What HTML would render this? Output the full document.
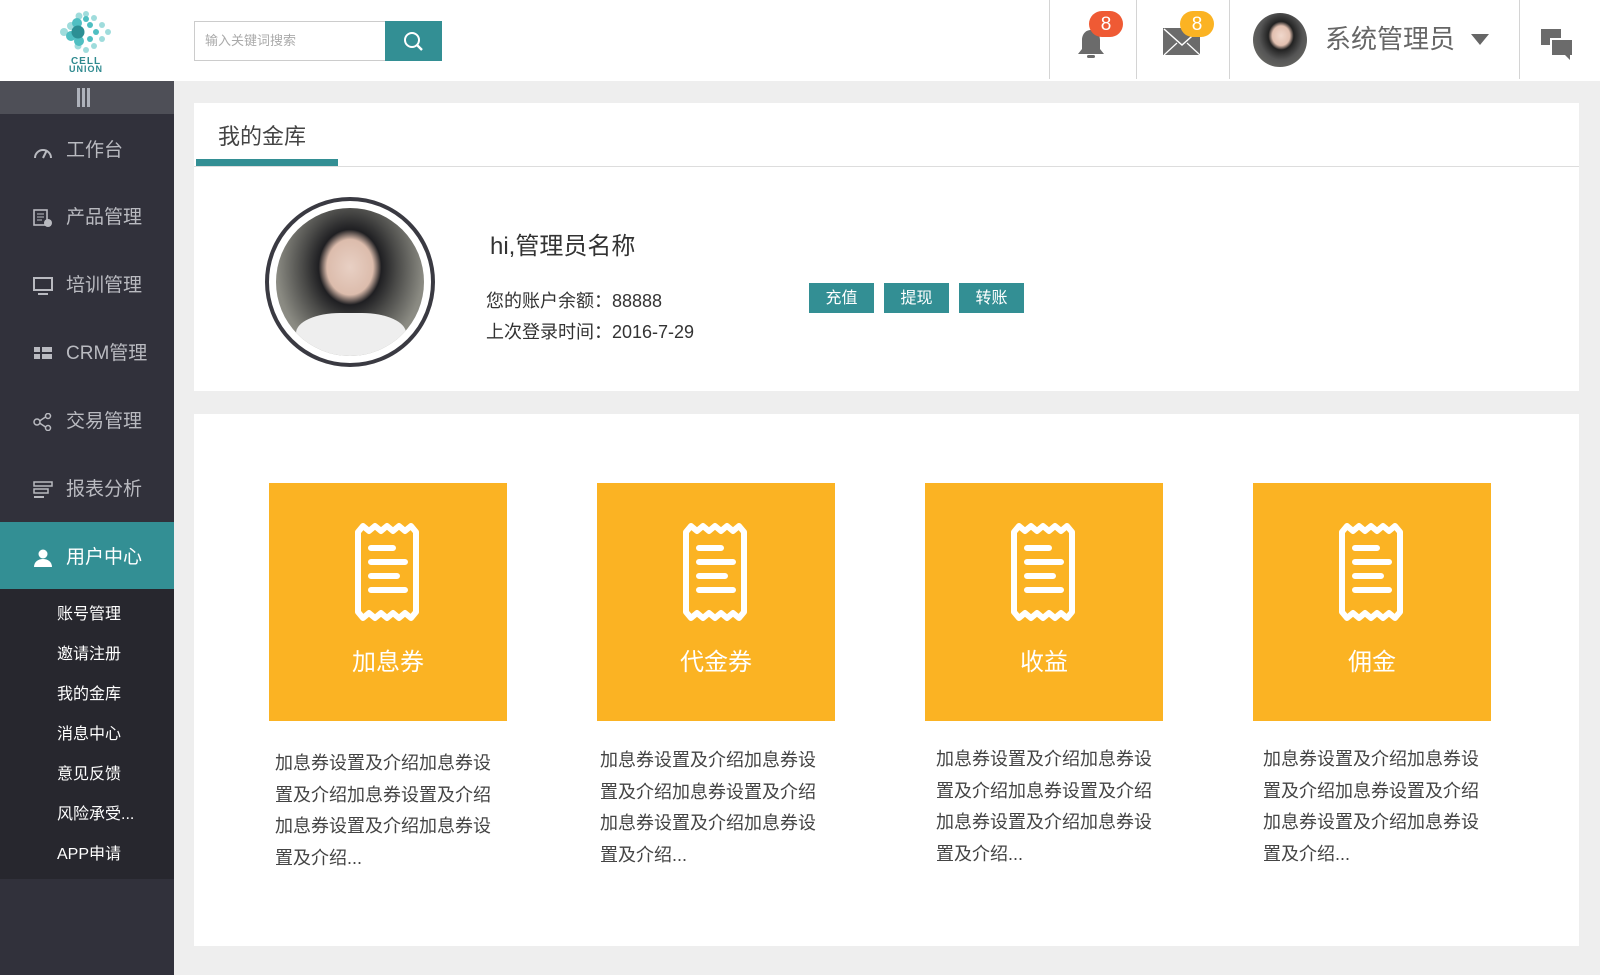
<!DOCTYPE html>
<html><head><meta charset="utf-8"><style>
*{margin:0;padding:0;box-sizing:border-box}
body{width:1600px;height:975px;background:#eeeeee;font-family:"Liberation Sans","Noto Sans CJK SC",sans-serif;position:relative;overflow:hidden;color:#333}
.abs{position:absolute}
#hdr{left:0;top:0;width:1600px;height:81px;background:#fff}
.sep{position:absolute;top:0;width:1px;height:79px;background:#d4d4d4}
.badge{position:absolute;width:34px;height:26px;border-radius:13px;color:#fff;font-size:19px;text-align:center;line-height:28px}
#side{left:0;top:81px;width:174px;height:894px;background:#31313b}
.mi{position:absolute;left:0;width:174px;height:68px;color:#b9bac0;font-size:19px;line-height:72px;padding-left:66px}
.mi svg{position:absolute;left:33px;top:27px}
.si{position:absolute;left:57px;color:#fff;font-size:16px;line-height:24px}
.card{background:#fff;position:absolute}
.btn{position:absolute;top:283px;width:65px;height:30px;background:#338f94;color:#fff;font-size:16px;text-align:center;line-height:32px}
.tile{position:absolute;top:483px;width:238px;height:238px;background:#fbb323;color:#fff;font-size:24px;text-align:center}
.tile svg{position:absolute;left:84px;top:39px}
.tile span{position:absolute;left:0;right:0;top:164px;line-height:32px}
.desc{position:absolute;top:748px;width:230px;font-size:18px;line-height:31.5px;color:#444}
</style></head><body>
<div id="hdr" class="abs">
 <svg class="abs" style="left:56px;top:8px" width="60" height="66" viewBox="0 0 60 66">
  <g fill="#9fdcdc"><circle cx="15" cy="18" r="4"/><circle cx="23" cy="8" r="3.5"/><circle cx="30" cy="6" r="3"/><circle cx="38" cy="10" r="3"/><circle cx="46" cy="17" r="3"/><circle cx="52" cy="24" r="3"/><circle cx="46" cy="31" r="3"/><circle cx="38" cy="38" r="3"/><circle cx="30" cy="42" r="3"/><circle cx="22" cy="38" r="3.5"/><circle cx="8" cy="24" r="4"/></g>
  <g fill="#4fbfc2"><circle cx="21" cy="15" r="5"/><circle cx="15" cy="28" r="5"/><circle cx="23" cy="33" r="5"/><circle cx="34" cy="17" r="3"/><circle cx="40" cy="24" r="3"/><circle cx="34" cy="31" r="3"/><circle cx="30" cy="11" r="3"/></g>
  <circle cx="22" cy="24" r="6.5" fill="#2c8f94"/>
  <text x="30" y="56" font-size="10" font-weight="bold" fill="#2f8a8f" text-anchor="middle" font-family="Liberation Sans" letter-spacing="1">CELL</text>
  <text x="30" y="64" font-size="9" font-weight="bold" fill="#2f8a8f" text-anchor="middle" font-family="Liberation Sans" letter-spacing="1">UNION</text>
 </svg>
 <div class="abs" style="left:194px;top:21px;width:192px;height:40px;border:1px solid #ccc;font-size:13px;color:#aaa;line-height:38px;padding-left:10px">输入关键词搜索</div>
 <div class="abs" style="left:385px;top:21px;width:57px;height:40px;background:#338f94">
  <svg width="57" height="40"><circle cx="27" cy="19" r="7" fill="none" stroke="#fff" stroke-width="2"/><line x1="32" y1="24" x2="37" y2="29" stroke="#fff" stroke-width="2.4"/></svg>
 </div>
 <div class="sep" style="left:1049px"></div><div class="sep" style="left:1136px"></div><div class="sep" style="left:1229px"></div><div class="sep" style="left:1519px"></div>
 <svg class="abs" style="left:1074px;top:28px" width="34" height="34" viewBox="0 0 34 34"><path d="M17 2c-6 0-9 5-9 10v9l-4 5h26l-4-5v-9c0-5-3-10-9-10z" fill="#6b6b6b"/><rect x="13" y="27" width="8" height="3" rx="1.5" fill="#6b6b6b"/></svg>
 <div class="badge" style="left:1089px;top:11px;background:#ef5a34">8</div>
 <svg class="abs" style="left:1163px;top:28px" width="38" height="28" viewBox="0 0 38 28"><rect width="37" height="27" fill="#6b6b6b"/><path d="M1 1l18 16 18-16" fill="none" stroke="#fff" stroke-width="1.5"/><path d="M1 27l13-12M37 27l-13-12" stroke="#fff" stroke-width="1.2"/></svg>
 <div class="badge" style="left:1180px;top:11px;background:#fbb323">8</div>
 <div class="abs" style="left:1253px;top:13px;width:54px;height:54px;border-radius:50%;background:radial-gradient(ellipse at 52% 42%,#f0d8cc 0,#e2c0b0 22%,#222 32%,#555 55%,#7a7a72 100%)"></div>
 <div class="abs" style="left:1325px;top:21px;font-size:26px;color:#666;line-height:36px">系统管理员</div>
 <svg class="abs" style="left:1471px;top:34px" width="20" height="12"><path d="M0 0h18l-9 11z" fill="#666"/></svg>
 <svg class="abs" style="left:1541px;top:29px" width="34" height="34" viewBox="0 0 34 34"><rect x="0" y="0" width="20" height="16" fill="#6b6b6b"/><rect x="9" y="9" width="22" height="17" fill="#fff"/><rect x="11" y="11" width="20" height="15" fill="#6b6b6b"/><path d="M24 26h5v5z" fill="#6b6b6b"/></svg>
</div>
<div id="side" class="abs">
 <div class="abs" style="left:0;top:0;width:174px;height:33px;background:#4e4f57"><div class="abs" style="left:77px;top:7px;width:3px;height:19px;background:#aeb2bb"></div><div class="abs" style="left:82px;top:7px;width:3px;height:19px;background:#aeb2bb"></div><div class="abs" style="left:87px;top:7px;width:3px;height:19px;background:#aeb2bb"></div></div>
 <div class="mi" style="top:34px"><svg width="20" height="18"><path d="M2 16a8 8 0 0 1 16 0" fill="none" stroke="#b9bac0" stroke-width="2"/><path d="M10 16l4-8" stroke="#b9bac0" stroke-width="2"/></svg>工作台</div>
 <div class="mi" style="top:101px"><svg width="20" height="18"><rect x="1" y="1" width="13" height="15" fill="none" stroke="#b9bac0" stroke-width="1.6"/><path d="M4 5h7M4 8h7M4 11h5" stroke="#b9bac0"/><circle cx="15" cy="14" r="4" fill="#b9bac0"/></svg>产品管理</div>
 <div class="mi" style="top:169px"><svg width="20" height="18"><rect x="1" y="1" width="18" height="12" fill="none" stroke="#b9bac0" stroke-width="2"/><path d="M5 17h10" stroke="#b9bac0" stroke-width="2"/></svg>培训管理</div>
 <div class="mi" style="top:237px"><svg width="20" height="18"><rect x="1" y="2" width="6" height="5" fill="#b9bac0"/><rect x="9" y="2" width="10" height="5" fill="#b9bac0"/><rect x="1" y="9" width="6" height="5" fill="#b9bac0"/><rect x="9" y="9" width="10" height="5" fill="#b9bac0"/></svg>CRM管理</div>
 <div class="mi" style="top:305px"><svg width="20" height="18"><circle cx="4" cy="9" r="3" fill="none" stroke="#b9bac0" stroke-width="1.5"/><circle cx="15" cy="3" r="2.5" fill="none" stroke="#b9bac0" stroke-width="1.5"/><circle cx="15" cy="15" r="2.5" fill="none" stroke="#b9bac0" stroke-width="1.5"/><path d="M6.5 8l6-4M6.5 10l6 4" stroke="#b9bac0" stroke-width="1.5"/></svg>交易管理</div>
 <div class="mi" style="top:373px"><svg width="20" height="18"><rect x="1" y="1" width="18" height="4" fill="none" stroke="#b9bac0" stroke-width="1.5"/><rect x="1" y="8" width="14" height="4" fill="none" stroke="#b9bac0" stroke-width="1.5"/><path d="M1 16h10" stroke="#b9bac0" stroke-width="2"/></svg>报表分析</div>
 <div class="mi" style="top:441px;height:67px;background:#338f94;color:#fff"><svg width="20" height="18"><circle cx="10" cy="5" r="4.5" fill="#fff"/><path d="M1 18c0-5 4-8 9-8s9 3 9 8z" fill="#fff"/></svg>用户中心</div>
 <div class="abs" style="left:0;top:508px;width:174px;height:290px;background:#27272e">
  <div class="si" style="top:14px">账号管理</div><div class="si" style="top:54px">邀请注册</div><div class="si" style="top:94px">我的金库</div><div class="si" style="top:134px">消息中心</div><div class="si" style="top:174px">意见反馈</div><div class="si" style="top:214px">风险承受...</div><div class="si" style="top:254px">APP申请</div>
 </div>
</div>
<div class="card" style="left:194px;top:103px;width:1385px;height:288px">
 <div class="abs" style="left:24px;top:17px;font-size:22px;color:#444;line-height:34px">我的金库</div>
 <div class="abs" style="left:2px;top:56px;width:142px;height:7px;background:#338f94"></div>
 <div class="abs" style="left:0;top:63px;width:1385px;height:1px;background:#ddd"></div>
 <div class="abs" style="left:71px;top:94px;width:170px;height:170px;border-radius:50%;border:4px solid #3a3a42;background:#fff"></div>
 <div class="abs" style="left:82px;top:105px;width:148px;height:148px;border-radius:50%;background:radial-gradient(ellipse at 50% 40%,#e8d0c4 0,#dcbcac 22%,#1f1f22 30%,#4a4a48 45%,#8a8a82 70%,#9a9a92 100%);overflow:hidden"><div style="position:absolute;left:20px;top:105px;width:110px;height:50px;background:#eee;border-radius:40%"></div></div>
 <div class="abs" style="left:296px;top:128px;font-size:24px;color:#333;line-height:32px">hi,管理员名称</div>
 <div class="abs" style="left:292px;top:186px;font-size:18px;color:#333;line-height:24px">您的账户余额：88888</div>
 <div class="abs" style="left:292px;top:217px;font-size:18px;color:#333;line-height:24px">上次登录时间：2016-7-29</div>
</div>
<div class="btn" style="left:809px">充值</div><div class="btn" style="left:884px">提现</div><div class="btn" style="left:959px">转账</div>
<div class="card" style="left:194px;top:414px;width:1385px;height:532px"></div>
<div class="tile" style="left:269px"><svg width="70" height="100" viewBox="0 0 70 100"><path d="M5 10l5-6 6 5 6-5 6 5 6-5 6 5 6-5 6 5 6-5 5 6v80l-5 6-6-5-6 5-6-5-6 5-6-5-6 5-6-5-6 5-5-6z" fill="none" stroke="#fff" stroke-width="6" stroke-linejoin="round"/><path d="M18 26h22M18 40h34M18 54h26M18 68h34" stroke="#fff" stroke-width="6" stroke-linecap="round"/></svg><span>加息券</span></div>
<div class="tile" style="left:597px"><svg width="70" height="100" viewBox="0 0 70 100"><path d="M5 10l5-6 6 5 6-5 6 5 6-5 6 5 6-5 6 5 6-5 5 6v80l-5 6-6-5-6 5-6-5-6 5-6-5-6 5-6-5-6 5-5-6z" fill="none" stroke="#fff" stroke-width="6" stroke-linejoin="round"/><path d="M18 26h22M18 40h34M18 54h26M18 68h34" stroke="#fff" stroke-width="6" stroke-linecap="round"/></svg><span>代金券</span></div>
<div class="tile" style="left:925px"><svg width="70" height="100" viewBox="0 0 70 100"><path d="M5 10l5-6 6 5 6-5 6 5 6-5 6 5 6-5 6 5 6-5 5 6v80l-5 6-6-5-6 5-6-5-6 5-6-5-6 5-6-5-6 5-5-6z" fill="none" stroke="#fff" stroke-width="6" stroke-linejoin="round"/><path d="M18 26h22M18 40h34M18 54h26M18 68h34" stroke="#fff" stroke-width="6" stroke-linecap="round"/></svg><span>收益</span></div>
<div class="tile" style="left:1253px"><svg width="70" height="100" viewBox="0 0 70 100"><path d="M5 10l5-6 6 5 6-5 6 5 6-5 6 5 6-5 6 5 6-5 5 6v80l-5 6-6-5-6 5-6-5-6 5-6-5-6 5-6-5-6 5-5-6z" fill="none" stroke="#fff" stroke-width="6" stroke-linejoin="round"/><path d="M18 26h22M18 40h34M18 54h26M18 68h34" stroke="#fff" stroke-width="6" stroke-linecap="round"/></svg><span>佣金</span></div>
<div class="desc" style="left:275px">加息券设置及介绍加息券设置及介绍加息券设置及介绍加息券设置及介绍加息券设置及介绍...</div>
<div class="desc" style="left:600px;top:745px">加息券设置及介绍加息券设置及介绍加息券设置及介绍加息券设置及介绍加息券设置及介绍...</div>
<div class="desc" style="left:936px;top:744px">加息券设置及介绍加息券设置及介绍加息券设置及介绍加息券设置及介绍加息券设置及介绍...</div>
<div class="desc" style="left:1263px;top:744px">加息券设置及介绍加息券设置及介绍加息券设置及介绍加息券设置及介绍加息券设置及介绍...</div>
</body></html>
